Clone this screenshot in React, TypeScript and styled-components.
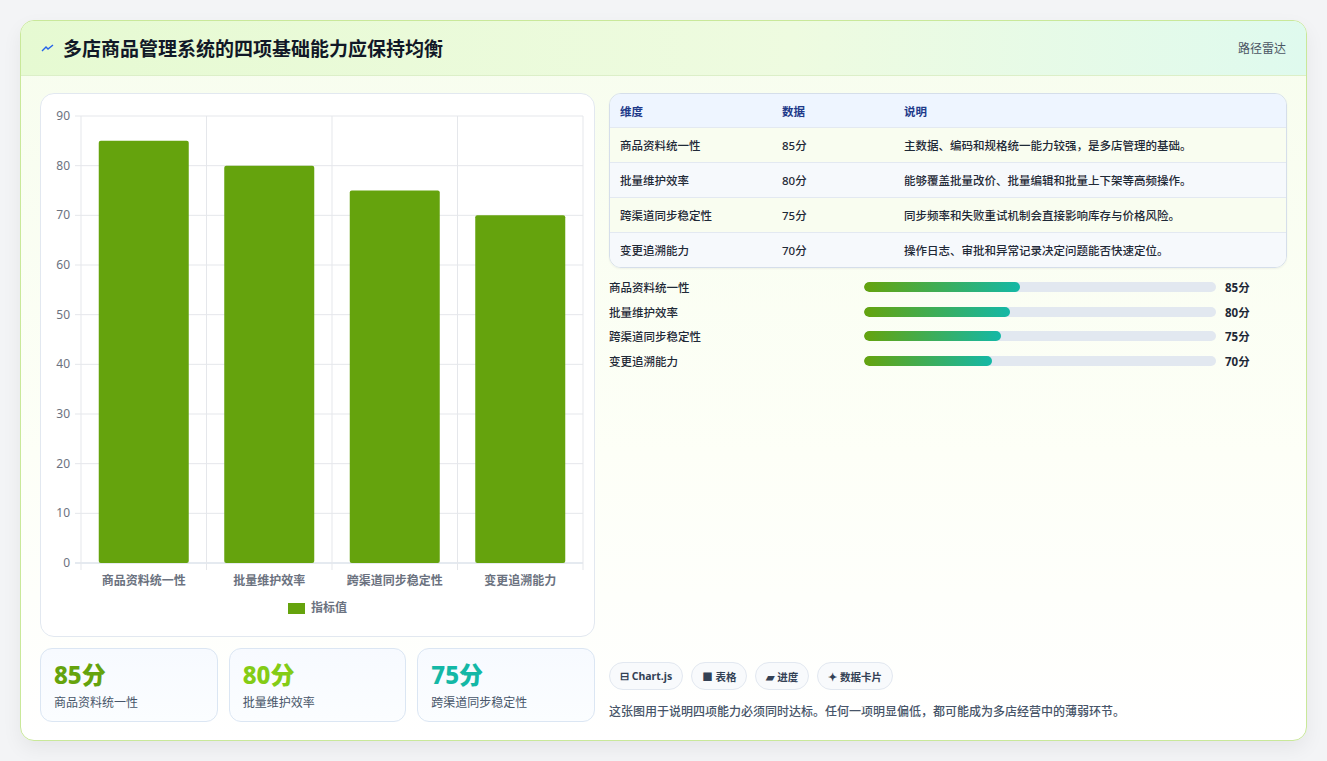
import React from "react";
import styled, { createGlobalStyle } from "styled-components";

const Global = createGlobalStyle`
  html, body { margin: 0; padding: 0; background: #f3f4f6; }
  body { font-family: "Noto Sans", "Noto Sans CJK SC", sans-serif; }
  * { box-sizing: border-box; }
`;

const Page = styled.div`
  padding: 20px 20px 20px 20px;
  width: 1327px;
  height: 761px;
`;
const Card = styled.div`
  width: 1287px;
  height: 721px;
  border: 1px solid #c9e89a;
  border-radius: 14px;
  background: linear-gradient(180deg, #f7fdee 0%, #fdfff7 60%, #ffffff 100%);
  box-shadow: 0 8px 20px rgba(0,0,0,0.06);
  overflow: hidden;
  display: flex;
  flex-direction: column;
`;
const Header = styled.div`
  height: 55px;
  flex: none;
  display: flex;
  align-items: center;
  justify-content: space-between;
  padding: 0 20px;
  background: linear-gradient(90deg, #e6fad2 0%, #eefbe0 60%, #dffaee 100%);
  border-bottom: 1px solid #dcefc8;
`;
const Title = styled.h1`
  margin: 0;
  font-size: 19px;
  font-weight: 700;
  color: #111827;
  display: flex;
  align-items: center;
  gap: 8px;
`;
const HeaderTag = styled.span`
  font-size: 12px;
  color: #4b5563;
`;
const Body = styled.div`
  flex: 1;
  display: grid;
  grid-template-columns: 555px 1fr;
  gap: 14px;
  padding: 17px 19px 18px 19px;
`;
const LeftCol = styled.div`
  display: flex;
  flex-direction: column;
  gap: 11px;
`;
const ChartCard = styled.div`
  height: 544px;
  background: #fff;
  border: 1px solid #e2e8f0;
  border-radius: 14px;
`;
const StatRow = styled.div`
  display: grid;
  grid-template-columns: repeat(3, 1fr);
  gap: 11px;
`;
const StatCard = styled.div`
  height: 74px;
  border: 1px solid #dbe6f3;
  border-radius: 12px;
  background: linear-gradient(180deg, #f7faff, #fbfdff);
  padding: 10px 13px;
`;
const StatValue = styled.div<{ $c: string }>`
  font-size: 24px;
  font-weight: 800;
  line-height: 32px;
  color: ${p => p.$c};
`;
const StatLabel = styled.div`
  font-size: 12px;
  color: #475569;
  margin-top: 2px;
`;
const RightCol = styled.div`
  display: flex;
  flex-direction: column;
`;
const Table = styled.div`
  border: 1px solid #d5deea;
  border-radius: 12px;
  overflow: hidden;
  box-shadow: 0 1px 2px rgba(0,0,0,0.05);
`;
const TRow = styled.div<{ $bg: string; $head?: boolean }>`
  display: grid;
  grid-template-columns: 162px 122px 1fr;
  height: ${p => (p.$head ? 33 : 35)}px;
  align-items: center;
  padding: 0 10px;
  background: ${p => p.$bg};
  border-top: ${p => (p.$head ? "none" : "1px solid #e3e9f1")};
  font-size: 11.5px;
  font-weight: ${p => (p.$head ? 700 : 500)};
  color: ${p => (p.$head ? "#1e3a8a" : "#1f2937")};
`;
const Bars = styled.div`
  display: flex;
  flex-direction: column;
  gap: 8px;
  margin-top: 11px;
`;
const BarRow = styled.div`
  display: grid;
  grid-template-columns: 255px 352px 1fr;
  align-items: center;
  gap: 0;
  height: 16.5px;
  font-size: 11.5px;
  color: #1f2937;
  font-weight: 500;
`;
const Track = styled.div`
  height: 10px;
  border-radius: 5px;
  background: #e2e8f0;
  overflow: hidden;
`;
const Fill = styled.div`
  height: 100%;
  border-radius: 5px;
  background: linear-gradient(90deg, #65a30d, #14b8a6);
`;
const BarVal = styled.span`
  font-weight: 700;
  padding-left: 9px;
`;
const Spacer = styled.div` flex: 1; `;
const Chips = styled.div`
  display: flex;
  gap: 8px;
`;
const Chip = styled.span`
  height: 28px;
  padding: 0 10px;
  border: 1px solid #e2e8f0;
  border-radius: 14px;
  background: #f8fafc;
  display: flex;
  align-items: center;
  gap: 4px;
  font-size: 10.5px;
  font-weight: 700;
  color: #334155;
`;
const Note = styled.p`
  margin: 12px 0 2px;
  font-size: 12px;
  font-weight: 500;
  color: #475569;
`;

const data = [
  { name: "商品资料统一性", v: 85, desc: "主数据、编码和规格统一能力较强，是多店管理的基础。" },
  { name: "批量维护效率", v: 80, desc: "能够覆盖批量改价、批量编辑和批量上下架等高频操作。" },
  { name: "跨渠道同步稳定性", v: 75, desc: "同步频率和失败重试机制会直接影响库存与价格风险。" },
  { name: "变更追溯能力", v: 70, desc: "操作日志、审批和异常记录决定问题能否快速定位。" },
];

function Chart() {
  const L = 40, R = 542, T = 22, B = 469;
  const step = (B - T) / 9;
  const cw = (R - L) / 4;
  return (
    <svg width="555" height="544" viewBox="0 0 555 544" fontFamily="'Noto Sans','Noto Sans CJK SC',sans-serif">
      {Array.from({ length: 10 }, (_, i) => {
        const y = B - i * step;
        return (
          <g key={i}>
            <line x1={L - 6} x2={R} y1={y} y2={y} stroke={i === 0 ? "#cbd5e1" : "#e5e7eb"} />
            <text x={29} y={y + 4} fontSize="12" fill="#6b7280" textAnchor="end">{i * 10}</text>
          </g>
        );
      })}
      {Array.from({ length: 5 }, (_, i) => (
        <line key={i} x1={L + i * cw} x2={L + i * cw} y1={T} y2={B + 7} stroke="#e5e7eb" />
      ))}
      {data.map((d, i) => {
        const x = L + i * cw + (cw - 90) / 2;
        const h = (d.v / 10) * step;
        return (
          <g key={d.name}>
            <rect x={x} y={B - h} width={90} height={h} fill="#65a30d" rx="2" />
            <text x={L + i * cw + cw / 2} y={491} fontSize="12" fontWeight="600" fill="#6b7280" textAnchor="middle">{d.name}</text>
          </g>
        );
      })}
      <rect x={247} y={509} width={17} height={11} fill="#65a30d" />
      <text x={270} y={518} fontSize="12" fontWeight="600" fill="#6b7280">指标值</text>
    </svg>
  );
}

export default function App() {
  const rowBg = ["#f9fdf0", "#f6f9fc", "#f9fdf0", "#f6f9fc"];
  return (
    <Page>
      <Global />
      <Card>
        <Header>
          <Title>
            <svg width="14" height="10" viewBox="0 0 14 10"><path d="M1 8 L5 4 L7 6 L12 2" stroke="#2563eb" strokeWidth="1.4" fill="none" /></svg>
            多店商品管理系统的四项基础能力应保持均衡
          </Title>
          <HeaderTag>路径雷达</HeaderTag>
        </Header>
        <Body>
          <LeftCol>
            <ChartCard><Chart /></ChartCard>
            <StatRow>
              <StatCard><StatValue $c="#65a30d">85分</StatValue><StatLabel>商品资料统一性</StatLabel></StatCard>
              <StatCard><StatValue $c="#84cc16">80分</StatValue><StatLabel>批量维护效率</StatLabel></StatCard>
              <StatCard><StatValue $c="#14b8a6">75分</StatValue><StatLabel>跨渠道同步稳定性</StatLabel></StatCard>
            </StatRow>
          </LeftCol>
          <RightCol>
            <Table>
              <TRow $head $bg="#eef5ff"><span>维度</span><span>数据</span><span>说明</span></TRow>
              {data.map((d, i) => (
                <TRow key={d.name} $bg={rowBg[i]}><span>{d.name}</span><span>{d.v}分</span><span>{d.desc}</span></TRow>
              ))}
            </Table>
            <Bars>
              {data.map(d => (
                <BarRow key={d.name}>
                  <span>{d.name}</span>
                  <Track><Fill style={{ width: `${d.v * 0.52}%` }} /></Track>
                  <BarVal>{d.v}分</BarVal>
                </BarRow>
              ))}
            </Bars>
            <Spacer />
            <Chips>
              <Chip>⊟ Chart.js</Chip>
              <Chip>■ 表格</Chip>
              <Chip>▰ 进度</Chip>
              <Chip>✦ 数据卡片</Chip>
            </Chips>
            <Note>这张图用于说明四项能力必须同时达标。任何一项明显偏低，都可能成为多店经营中的薄弱环节。</Note>
          </RightCol>
        </Body>
      </Card>
    </Page>
  );
}
